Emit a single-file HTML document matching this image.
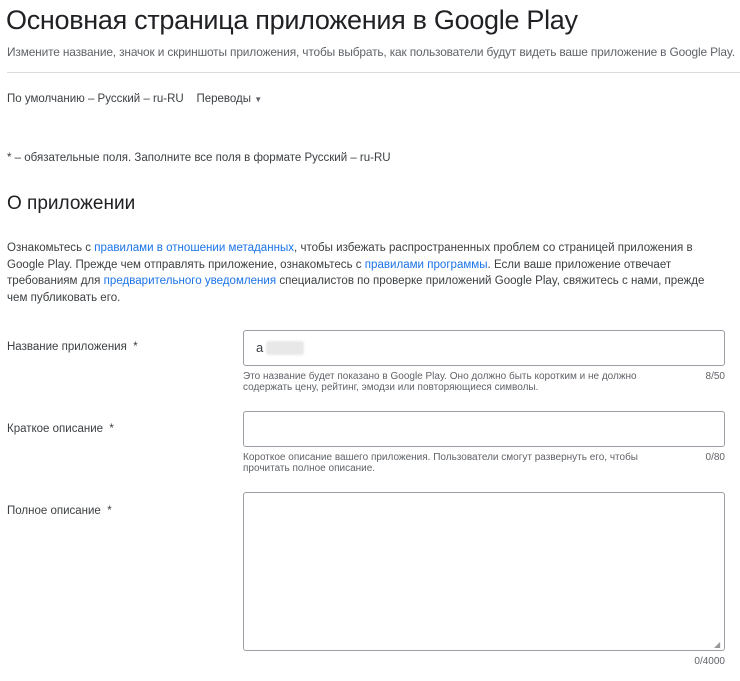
<!DOCTYPE html>
<html><head><meta charset="utf-8"><style>
body{margin:0;background:#fff;font-family:"Liberation Sans",sans-serif;color:#202124;width:740px;height:681px;overflow:hidden;position:relative}
.a{position:absolute;white-space:nowrap}
h1{position:absolute;left:6px;top:5px;margin:0;font-weight:normal;font-size:27px;letter-spacing:-0.3px}
.s{color:#5f6368}
.t{color:#3c4043}
a{color:#1a73e8;text-decoration:none}
.box{position:absolute;left:243px;width:480px;border:1px solid #9aa0a6;border-radius:3px}
.h{font-size:10px;color:#5f6368;line-height:11px}
</style></head><body>
<h1>Основная страница приложения в Google Play</h1>
<div class="a s" style="left:7px;top:45px;font-size:11.9px;letter-spacing:-0.15px">Измените название, значок и скриншоты приложения, чтобы выбрать, как пользователи будут видеть ваше приложение в Google Play.</div>
<div class="a" style="left:7px;top:72px;width:733px;height:1px;background:#dadce0"></div>
<div class="a t" style="left:7px;top:93px;font-size:11.5px">По умолчанию – Русский – ru-RU &nbsp;&nbsp; Переводы <span style="font-size:8px;color:#5f6368">▼</span></div>
<div class="a t" style="left:7px;top:152px;font-size:11.5px">* – обязательные поля. Заполните все поля в формате Русский – ru-RU</div>
<div class="a" style="left:7px;top:193px;font-size:19px">О приложении</div>
<div class="a t" style="left:7px;top:240px;line-height:16.5px;font-size:11.55px">Ознакомьтесь с <a>правилами в отношении метаданных</a>, чтобы избежать распространенных проблем со страницей приложения в<br>Google Play. Прежде чем отправлять приложение, ознакомьтесь с <a>правилами программы</a>. Если ваше приложение отвечает<br>требованиям для <a>предварительного уведомления</a> специалистов по проверке приложений Google Play, свяжитесь с нами, прежде<br>чем публиковать его.</div>

<div class="a t" style="left:7px;top:341px;font-size:11.5px">Название приложения &nbsp;*</div>
<div class="box" style="top:330px;height:34px"></div>
<div class="a" style="left:256px;top:340px;font-size:13px;color:#3c4043">a</div>
<div class="a" style="left:266px;top:341px;width:38px;height:14px;background:#e8e8e8;border-radius:3px;filter:blur(1px)"></div>
<div class="a h" style="left:243px;top:371px">Это название будет показано в Google Play. Оно должно быть коротким и не должно<br>содержать цену, рейтинг, эмодзи или повторяющиеся символы.</div>
<div class="a h" style="right:15px;top:371px">8/50</div>

<div class="a t" style="left:7px;top:423px;font-size:11.5px">Краткое описание &nbsp;*</div>
<div class="box" style="top:411px;height:34px"></div>
<div class="a h" style="left:243px;top:452px">Короткое описание вашего приложения. Пользователи смогут развернуть его, чтобы<br>прочитать полное описание.</div>
<div class="a h" style="right:15px;top:452px">0/80</div>

<div class="a t" style="left:7px;top:505px;font-size:11.5px">Полное описание &nbsp;*</div>
<div class="box" style="top:492px;height:157px"></div>
<div class="a" style="left:714px;top:640px;font-size:8px;color:#999">◢</div>
<div class="a h" style="right:15px;top:656px">0/4000</div>
</body></html>
